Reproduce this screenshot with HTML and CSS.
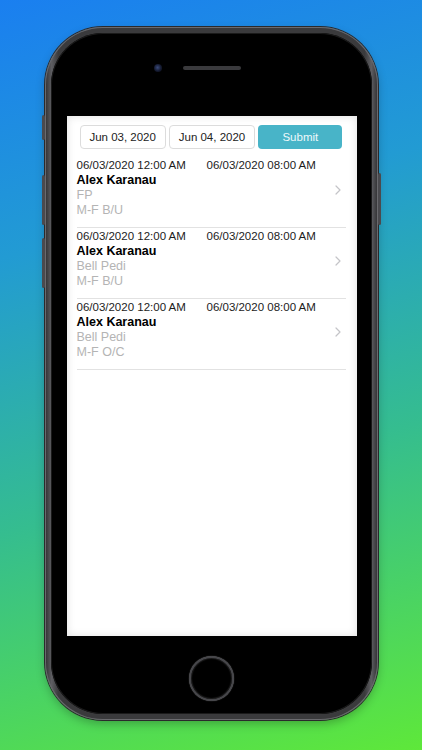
FILE: index.html
```html
<!DOCTYPE html>
<html>
<head>
<meta charset="utf-8">
<link rel="stylesheet" href="styles.css">
</head>
<body>
<div class="stage">
  <div class="phone">
    <span class="side-btn mute"></span>
    <span class="side-btn vol-up"></span>
    <span class="side-btn vol-down"></span>
    <span class="side-btn power"></span>
    <div class="bezel">
      <div class="top">
        <span class="camera"></span>
        <span class="speaker"></span>
        <span class="spacer"></span>
      </div>
      <div class="screen">
        <div class="toolbar">
          <div class="date-btn">Jun 03, 2020</div>
          <div class="date-btn">Jun 04, 2020</div>
          <div class="submit-btn">Submit</div>
        </div>
        <ul class="list">
          <li class="row">
            <div class="info">
              <div class="times"><span class="t1">06/03/2020 12:00 AM</span><span>06/03/2020 08:00 AM</span></div>
              <div class="name">Alex Karanau</div>
              <div class="sub">FP</div>
              <div class="sub">M-F B/U</div>
            </div>
            <svg class="chev" width="6" height="10" viewBox="0 0 6 10"><path d="M1 1l4 4-4 4" fill="none" stroke="#c4c4c8" stroke-width="1.2" stroke-linecap="round" stroke-linejoin="round"/></svg>
          </li>
          <li class="row">
            <div class="info">
              <div class="times"><span class="t1">06/03/2020 12:00 AM</span><span>06/03/2020 08:00 AM</span></div>
              <div class="name">Alex Karanau</div>
              <div class="sub">Bell Pedi</div>
              <div class="sub">M-F B/U</div>
            </div>
            <svg class="chev" width="6" height="10" viewBox="0 0 6 10"><path d="M1 1l4 4-4 4" fill="none" stroke="#c4c4c8" stroke-width="1.2" stroke-linecap="round" stroke-linejoin="round"/></svg>
          </li>
          <li class="row">
            <div class="info">
              <div class="times"><span class="t1">06/03/2020 12:00 AM</span><span>06/03/2020 08:00 AM</span></div>
              <div class="name">Alex Karanau</div>
              <div class="sub">Bell Pedi</div>
              <div class="sub">M-F O/C</div>
            </div>
            <svg class="chev" width="6" height="10" viewBox="0 0 6 10"><path d="M1 1l4 4-4 4" fill="none" stroke="#c4c4c8" stroke-width="1.2" stroke-linecap="round" stroke-linejoin="round"/></svg>
          </li>
        </ul>
      </div>
      <div class="bottom">
        <span class="home"></span>
      </div>
    </div>
  </div>
</div>
</body>
</html>
```
FILE: styles.css
```css
html, body {
  margin: 0;
  padding: 0;
}
body {
  width: 422px;
  height: 750px;
  overflow: hidden;
  font-family: "Liberation Sans", Arial, sans-serif;
  background: linear-gradient(165deg, #1a7ff0 0%, #229bd3 30%, #35bd8f 62%, #5ee83a 100%);
}
.stage {
  display: flex;
  justify-content: center;
  padding-top: 27px;
  padding-left: 1px;
}
.phone {
  position: relative;
  width: 333px;
  height: 693px;
  box-sizing: border-box;
  padding: 6px;
  border-radius: 58px;
  background: linear-gradient(90deg, #2e2e30 0%, #5e5e62 2%, #3a3a3c 4%, #3a3a3c 96%, #5e5e62 98%, #2e2e30 100%);
  box-shadow: 0 0 0 1px #2a2a2c, 0 4px 10px rgba(0,0,0,0.25), inset 0 0 0 1px #6a6a6e;
}
.side-btn {
  position: absolute;
  width: 3px;
  background: #4a4a4e;
  border-radius: 2px;
}
.mute { left: -3px; top: 88px; height: 25px; }
.vol-up { left: -3px; top: 148px; height: 50px; }
.vol-down { left: -3px; top: 211px; height: 50px; }
.power { right: -3px; top: 146px; height: 52px; }
.bezel {
  height: 100%;
  background: #000;
  border-radius: 52px;
  display: flex;
  flex-direction: column;
  align-items: center;
  box-shadow: inset 0 0 0 1px #1a1a1a;
}
.top {
  height: 83px;
  box-sizing: border-box;
  padding-top: 33px;
  display: flex;
  align-items: flex-start;
  justify-content: center;
}
.camera {
  width: 8px;
  height: 8px;
  border-radius: 50%;
  background: radial-gradient(circle at 45% 45%, #3a4a7a 0%, #141a30 55%, #0a0a12 100%);
  margin-top: -2px;
}
.speaker {
  width: 58px;
  height: 4px;
  border-radius: 2px;
  background: #3a3a3d;
  margin-left: 21px;
}
.spacer {
  width: 29px;
}
.screen {
  width: 290px;
  height: 520px;
  background: #fff;
  box-shadow: inset 0 0 8px rgba(0,0,0,0.12);
  box-sizing: border-box;
  padding: 9px 11px 0 10px;
}
.toolbar {
  display: flex;
  gap: 3px;
  padding: 0 3px 0 3px;
  height: 24px;
}
.date-btn, .submit-btn {
  flex: 1;
  display: flex;
  align-items: center;
  justify-content: center;
  border-radius: 4px;
  font-size: 11.5px;
  box-sizing: border-box;
}
.date-btn {
  border: 1px solid #dcdcdc;
  color: #222;
  background: #fff;
}
.submit-btn {
  background: #48b4c8;
  color: #eef9fb;
}
.list {
  list-style: none;
  margin: 8px 0 0 0;
  padding: 0;
}
.row {
  display: flex;
  align-items: center;
  border-bottom: 1px solid #e2e2e2;
  padding: 1px 0 9px 0;
  height: 60px;
  box-sizing: content-box;
}
.info {
  flex: 1;
}
.times {
  display: flex;
  font-size: 11.5px;
  color: #1c1c1c;
  line-height: 15px;
}
.t1 {
  width: 130px;
}
.name {
  font-size: 12.5px;
  font-weight: bold;
  color: #000;
  line-height: 15px;
}
.sub {
  font-size: 12.5px;
  color: #b4b4b4;
  line-height: 15.5px;
}
.chev {
  margin-right: 5px;
  margin-top: 3px;
}
.bottom {
  flex: 1;
  display: flex;
  justify-content: center;
  padding-top: 20px;
}
.home {
  width: 41px;
  height: 41px;
  border-radius: 50%;
  border: 2px solid #46464a;
  box-shadow: inset 0 0 1px 1px #1c1c1c, 0 0 1px #777;
  background: #000;
}
```
